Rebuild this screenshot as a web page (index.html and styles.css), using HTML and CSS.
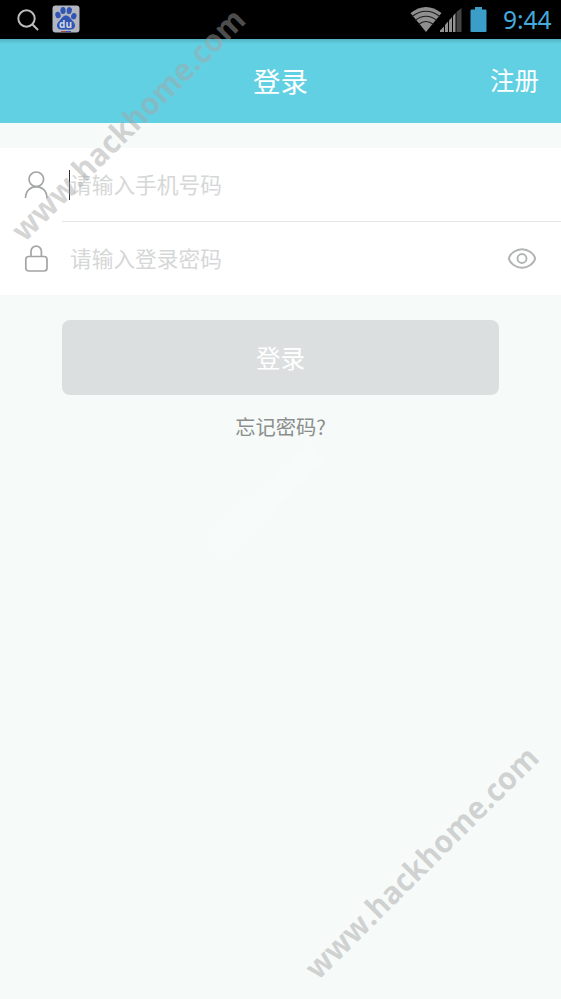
FILE: index.html
```html
<!DOCTYPE html>
<html lang="zh-CN">
<head>
<meta charset="utf-8">
<title>登录</title>
<link rel="stylesheet" href="styles.css">
</head>
<body>
<div class="status">
  <svg class="search" width="24" height="24" viewBox="0 0 24 24" fill="none" stroke="#bdbdbd" stroke-width="2"><circle cx="9.500" cy="9.500" r="8.200"/><path d="M15.300 15.300l5.700 5.700"/></svg>
  <svg class="baidu" width="28" height="28" viewBox="0 0 28 28">
    <rect x=".5" y=".5" width="27" height="27" rx="3" fill="#b3b6be"/>
    <g fill="#3155b5"><ellipse cx="6" cy="10" rx="2.700" ry="3.300" transform="rotate(-12 6 10)"/><ellipse cx="11" cy="5.400" rx="2.600" ry="3.500"/><ellipse cx="17.300" cy="5.600" rx="2.600" ry="3.500" transform="rotate(10 17.300 5.600)"/><ellipse cx="21.800" cy="11.200" rx="2.700" ry="3.200" transform="rotate(12 21.800 11.200)"/><path d="M14 10.500c3 0 4 2.500 6 4.700 2.500 2.600 3.800 4.300 2.700 7-1.200 2.600-4 2.500-8.700 2.400-4.700.1-7.500.2-8.700-2.400-1.100-2.700.2-4.400 2.700-7 2-2.200 3-4.700 6-4.700z"/></g>
    <text x="13.500" y="22.500" text-anchor="middle" class="du">du</text>
    <path d="M9 26.500h5" stroke="#a34b4b"/><path d="M14 26.500h5" stroke="#3155b5"/>
  </svg>
  <span class="grow"></span>
  <svg class="wifi" width="32" height="25" viewBox="0 0 32 25"><path d="M0.500 6Q16-6 31.500 6L16 25z" fill="#8f8f8f"/><g fill="none" stroke="#1c1c1c" stroke-width="1.100"><path d="M2 9.500Q16-1 30 9.500"/><path d="M5 13.500Q16 5 27 13.500"/><path d="M8.500 17.500Q16 11.500 23.500 17.500"/></g></svg>
  <svg class="signal" width="22" height="24" viewBox="0 0 22 24"><path d="M0 24v-1.500L4 18.500V24zM5 24v-7l3-3.500V24zM9 24V12.500L12 9v15zM13 24V8l2.500-3V24z" fill="#929292"/><path d="M16.500 24V4L21.500 0v24z" fill="#444"/></svg>
  <svg class="battery" width="17" height="26" viewBox="0 0 17 26"><path d="M5 0h7v2.500h3.500q1 0 1 1V24q0 1-1 1h-14q-1 0-1-1V3.500q0-1 1-1H5z" fill="#3b9ec9"/></svg>
  <span class="time">9:44</span>
</div>
<header class="bar"><span></span><h1>登录</h1><a class="register">注册</a></header>
<main>
  <div class="form">
    <label class="row">
      <svg class="icon" width="24" height="28" viewBox="0 0 24 28" fill="none" stroke="#a3a5a5" stroke-width="1.700"><circle cx="12.300" cy="8.300" r="7.300"/><path d="M1.500 27C2 11.800 22.500 11.800 23 27"/></svg>
      <span class="field focused">请输入手机号码</span>
    </label>
    <div class="line"></div>
    <label class="row">
      <svg class="icon" width="24" height="28" viewBox="0 0 24 28" fill="none" stroke="#a3a5a5" stroke-width="1.700"><rect x="1.800" y="11.500" width="21.200" height="14.500" rx="3"/><path d="M7 11.500V6.300a5.200 5.200 0 0 1 10.400 0v5.200"/></svg>
      <span class="field">请输入登录密码</span>
      <svg class="eye" width="30" height="22" viewBox="0 0 30 22" fill="none" stroke="#b2b4b4" stroke-width="1.900"><path d="M1.800 10.500C3 5.500 9 1.200 15 1.200s12 4.300 13.200 9.300C27 15.500 21 19.800 15 19.800S3 15.500 1.800 10.500z"/><circle cx="15" cy="10.500" r="4.500"/></svg>
    </label>
  </div>
  <div class="submit">登录</div>
  <a class="forgot">忘记密码?</a>
</main>
<svg class="marks" width="561" height="999" viewBox="0 0 561 999">
  <text transform="translate(24.500 243) rotate(-44.800)" textLength="314" lengthAdjust="spacingAndGlyphs">www.hackhome.com</text>
  <text transform="translate(318 981) rotate(-44.800)" textLength="314" lengthAdjust="spacingAndGlyphs">www.hackhome.com</text>
  <path class="haze" d="M215 548L317 452"/>
</svg>
</body>
</html>
```

FILE: styles.css
```css
* { box-sizing: border-box; }
body {
  margin: 0;
  width: 561px;
  height: 999px;
  overflow: hidden;
  position: relative;
  background: #f6faf9;
  font-family: "Noto Sans CJK SC", sans-serif;
}
.status {
  height: 39px;
  background: #000;
  display: flex;
  align-items: flex-start;
  padding: 0 10px 0 17px;
}
.search { margin-top: 9px; }
.baidu { margin: 5px 0 0 11px; }
.du { font: bold 10px "Open Sans", sans-serif; fill: #d5d8e2; }
.grow { flex: 1; }
.wifi { margin-top: 7px; }
.signal { margin: 8px 0 0 -2px; }
.battery { margin: 7px 0 0 8px; }
.time {
  margin-left: 16px;
  width: 48px;
  font: 24.500px/40px "Noto Sans", sans-serif;
  color: #45aadb;
  white-space: nowrap;
}
.bar {
  height: 84px;
  background: linear-gradient(#50b3c2, #62d0e3 5px);
  color: #fff;
  display: grid;
  grid-template-columns: 1fr auto 1fr;
  align-items: center;
  padding: 0 22px 2px;
}
.bar h1 { margin: 0; font-size: 27.500px; font-weight: 400; line-height: 40px; }
.register { justify-self: end; font-size: 24.500px; line-height: 40px; }
main { display: flex; flex-direction: column; align-items: center; padding-top: 25px; }
.form { width: 100%; background: #fff; }
.row { height: 73px; display: flex; align-items: center; padding: 0 24px; }
.icon { flex: none; }
.field {
  flex: 1;
  margin-left: 21px;
  font-size: 21.700px;
  line-height: 28px;
  padding-bottom: 2px;
  color: #d6d7d7;
  border-left: 1px solid transparent;
}
.focused { border-left-color: #333; }
.line { height: 1px; margin-left: 62px; background: #e4e6e6; }
.submit {
  width: 437px;
  height: 75px;
  margin-top: 25px;
  border-radius: 8px;
  background: #dcdfe0;
  color: #fff;
  font-size: 24.500px;
  line-height: 75px;
  text-align: center;
}
.forgot { margin-top: 16px; font-size: 20.300px; line-height: 30px; color: #8b8e8d; }
.marks { position: absolute; left: 0; top: 0; pointer-events: none; }
.marks text { font: 700 31px "Open Sans", sans-serif; fill: #a6a6a6; fill-opacity: .48; }
.haze { stroke: #fff; stroke-opacity: .2; stroke-width: 24; }
```
